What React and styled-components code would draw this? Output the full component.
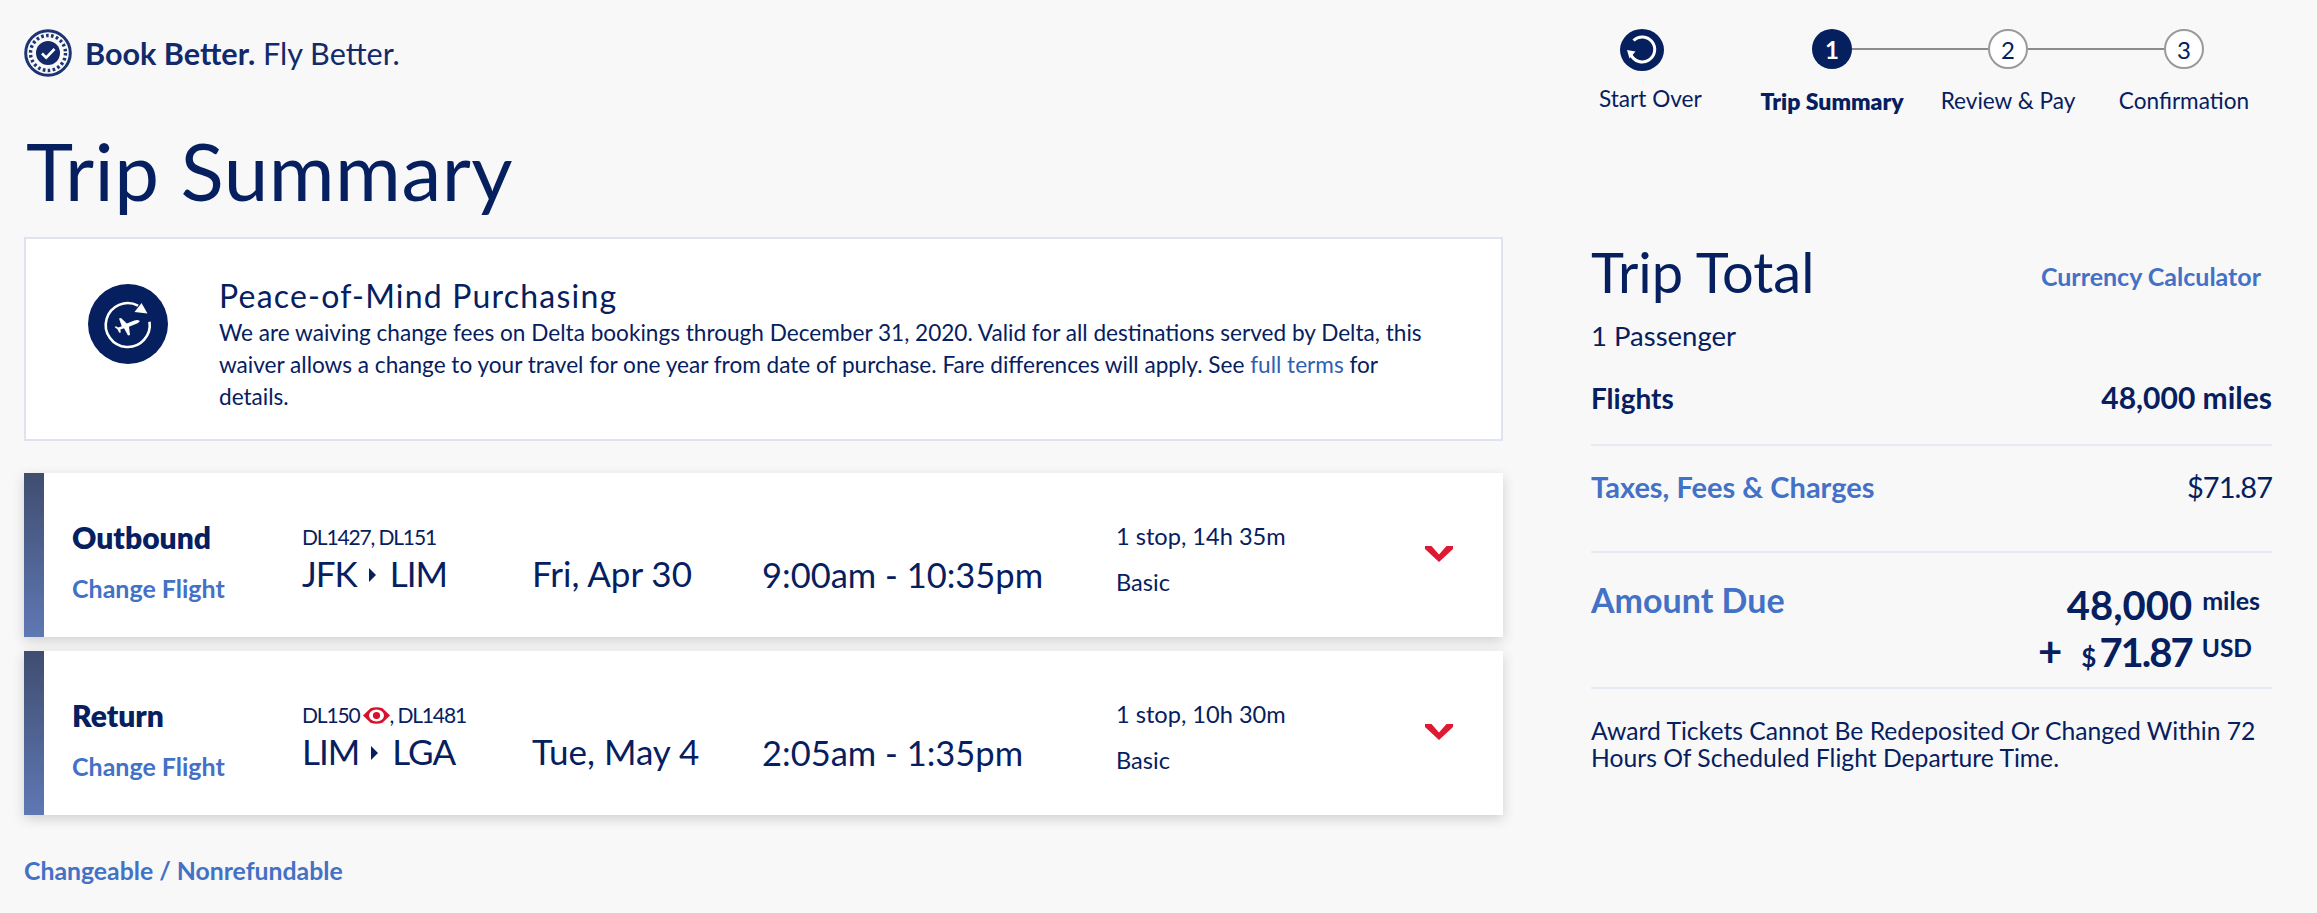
import React from "react";
import styled, { createGlobalStyle } from "styled-components";

const NAVY = "#06205f";
const BLUE = "#4371c6";
const RED = "#e01933";

const Global = createGlobalStyle`
  html, body { margin: 0; padding: 0; background: #f8f8f8; }
  body { font-family: "Lato", "Liberation Sans", sans-serif; color: ${NAVY}; }
  * { box-sizing: border-box; }
`;

const Page = styled.div`
  width: 2317px;
  height: 913px;
  overflow: hidden;
  padding: 29px 45px 0 24px;
  display: grid;
  grid-template-columns: 1479px 681px;
  column-gap: 88px;
  align-items: start;
`;
const LeftColumn = styled.main`display: flex; flex-direction: column;`;
const RightColumn = styled.aside`display: flex; flex-direction: column;`;

const Brand = styled.div`display: flex; align-items: center; height: 48px;`;
const BrandText = styled.div`
  margin-left: 13px;
  font-size: 30.6px;
  white-space: pre;
  color: #122a6b;
  b { font-weight: 700; }
`;
const Title = styled.h1`
  margin: 45px 0 0 2px;
  font-size: 80px;
  line-height: 96px;
  font-weight: 400;
  letter-spacing: 0.5px;
  white-space: nowrap;
`;

const Banner = styled.section`
  margin-top: 19px;
  height: 204px;
  background: #fff;
  border: 2px solid #dee3ef;
  display: flex;
  align-items: flex-start;
  padding: 45px 0 0 62px;
`;
const BannerIcon = styled.svg`width: 80px; height: 80px; flex: none; margin-right: 51px;`;
const BannerBody = styled.div`width: 1230px;`;
const BannerTitle = styled.h2`
  margin: -8px 0 1px;
  font-size: 32px;
  line-height: 40px;
  font-weight: 400;
  letter-spacing: 1.2px;
`;
const BannerText = styled.p`
  margin: 0;
  font-size: 22.6px;
  line-height: 32px;
  a { color: #2f5fb3; text-decoration: none; }
`;

const Card = styled.article`
  margin-top: ${(p) => p.$gap}px;
  height: 164px;
  background: #fff;
  display: grid;
  grid-template-columns: 20px 28px 230px 230px 230px 354px 309px 1fr;
  box-shadow: 0 4px 12px rgba(0, 0, 0, 0.16);
`;
const Bar = styled.div`background: linear-gradient(180deg, #3f4d6f, #5f78b4);`;
const Spacer = styled.div``;
const Cell = styled.div`
  padding-top: ${(p) => p.$top}px;
  display: flex;
  flex-direction: column;
  white-space: nowrap;
`;
const Direction = styled.div`font-size: 30px; line-height: 34px; font-weight: 800;`;
const ChangeLink = styled.a`
  margin-top: 18px;
  font-size: 25px;
  line-height: 32px;
  font-weight: 700;
  color: ${BLUE};
`;
const FlightNums = styled.div`
  display: flex;
  align-items: center;
  font-size: 21px;
  line-height: 26px;
  letter-spacing: -1.15px;
`;
const Route = styled.div`
  margin-top: 1px;
  display: flex;
  align-items: center;
  font-size: 35px;
  line-height: 44px;
  letter-spacing: -1px;
`;
const RouteArrow = styled.svg`width: 7px; height: 14px; margin: 4px 14px 0 12px;`;
const BigText = styled.div`font-size: ${(p) => p.$size}px; line-height: 44px;`;
const SmallText = styled.div`font-size: 23.6px; line-height: 30px; margin-top: ${(p) => p.$gap || 0}px;`;
const Eye = styled.svg`width: 27px; height: 17px; margin: 0 0 0 3px;`;
const Chevron = styled.svg`width: 28px; height: 16px;`;

const Footnote = styled.a`
  margin-top: 40px;
  font-size: 24.8px;
  line-height: 32px;
  font-weight: 700;
  color: ${BLUE};
`;

const Stepper = styled.nav`display: flex; height: 209px;`;
const StartOver = styled.div`width: 153px; padding-left: 8px; display: flex; flex-direction: column;`;
const RoundIcon = styled.svg`width: 44px; height: 42px; margin-left: 21px;`;
const StepLabel = styled.div`
  font-size: ${(p) => (p.$bold ? 23 : 22.6)}px;
  line-height: 28px;
  margin-top: ${(p) => p.$top}px;
  font-weight: ${(p) => (p.$bold ? 800 : 400)};
  white-space: nowrap;
  text-align: ${(p) => p.$align || "center"};
`;
const Steps = styled.ol`
  list-style: none;
  margin: 0;
  padding: 0;
  display: grid;
  grid-template-columns: repeat(3, 176px);
`;
const Step = styled.li`display: flex; flex-direction: column; align-items: stretch;`;
const StepTrack = styled.div`display: flex; align-items: center; height: 40px;`;
const Connector = styled.div`flex: 1; height: 2px; background: ${(p) => (p.$hidden ? "transparent" : "#8c8c8c")};`;
const Bubble = styled.div`
  width: 40px;
  height: 40px;
  border-radius: 50%;
  flex: none;
  display: flex;
  align-items: center;
  justify-content: center;
  font-size: 24px;
  font-weight: ${(p) => (p.$active ? 700 : 400)};
  background: ${(p) => (p.$active ? NAVY : "#fff")};
  color: ${(p) => (p.$active ? "#fff" : NAVY)};
  border: ${(p) => (p.$active ? "none" : "2px solid #9a9a9a")};
`;

const TotalHead = styled.div`display: flex; justify-content: space-between; align-items: flex-start; padding-right: 11px;`;
const TotalTitle = styled.h2`margin: 0; font-size: 56px; line-height: 68px; font-weight: 400;`;
const CurrencyLink = styled.a`margin-top: 23px; font-size: 25px; line-height: 30px; font-weight: 700; color: ${BLUE};`;
const Passengers = styled.div`margin-top: 12px; font-size: 27.5px; line-height: 36px;`;
const Row = styled.div`
  display: flex;
  justify-content: space-between;
  align-items: baseline;
  padding: ${(p) => p.$pad};
  border-bottom: 2px solid #e6ebf5;
`;
const RowLabel = styled.span`
  font-size: ${(p) => p.$size}px;
  line-height: 36px;
  font-weight: ${(p) => p.$weight || 400};
  letter-spacing: ${(p) => p.$track || 0}px;
  color: ${(p) => (p.$link ? BLUE : NAVY)};
`;
const AmountRow = styled.div`
  display: flex;
  justify-content: space-between;
  align-items: flex-start;
  height: 136px;
  padding-top: 29px;
  border-bottom: 2px solid #e6ebf5;
`;
const AmountLines = styled.div`display: flex; flex-direction: column; align-items: flex-end;`;
const AmountLine = styled.div`display: flex; align-items: baseline; padding-right: ${(p) => p.$right}px;`;
const AmountBig = styled.span`font-size: 40px; line-height: 46px; font-weight: 700; letter-spacing: ${(p) => p.$track || 0}px;`;
const AmountPlus = styled.span`font-size: 42px; line-height: 46px; margin-right: 19px; font-weight: 700;`;
const AmountCur = styled.span`font-size: 26px; font-weight: 700; margin-right: 3px;`;
const AmountSup = styled.span`font-size: ${(p) => p.$size}px; font-weight: 700; margin-left: 10px; position: relative; top: -10px;`;
const Notice = styled.p`margin: 28px 0 0; font-size: 24.7px; line-height: 27px;`;

const LogoMark = () => (
  <svg width="48" height="48" viewBox="0 0 48 48" style={{ flex: "none" }}>
    <circle cx="24" cy="24" r="22.3" fill="none" stroke="#1c3474" strokeWidth="3" />
    <circle cx="24" cy="24" r="17.5" fill="none" stroke="#1c3474" strokeWidth="3.4" strokeDasharray="2.6 2.4" />
    <circle cx="24" cy="24" r="12" fill="#14296a" />
    <path d="M18 24.5l4.2 4.2L30.5 20" fill="none" stroke="#fff" strokeWidth="2.6" />
  </svg>
);

const PlaneIcon = () => (
  <BannerIcon viewBox="0 0 80 80">
    <circle cx="40" cy="40" r="40" fill={NAVY} />
    <path d="M61.5 37.8A22 22 0 1 1 50 21.6" fill="none" stroke="#fff" strokeWidth="2.6" />
    <polygon points="59.5,29.5 53.5,19 46.5,28" fill="#fff" />
    <path d="M51.5 36.2c1 1-1 2.6-3.2 3.5L41 42.8l1 8.2-2 .6-4-7.4-3.6 1.4.4 2.8-1.6.4-1.6-3.4-3-2.4 1.4-.8 2.2 1.4 3.6-1.4-2.8-7.6 2-.6 5.8 5.6 7.6-3c2.2-.9 4.1-.9 5 .4z" fill="#fff" />
  </BannerIcon>
);

const RestartIcon = () => (
  <RoundIcon viewBox="0 0 44 42">
    <ellipse cx="22" cy="21" rx="22" ry="21" fill={NAVY} />
    <path d="M11 26A12.5 12.5 0 1 0 13.5 11.5" fill="none" stroke="#fff" strokeWidth="3" />
    <polygon points="7,21 15.5,22.5 9.5,29.5" fill="#fff" />
  </RoundIcon>
);

const EyeIcon = () => (
  <Eye viewBox="0 0 27 17">
    <path d="M0 8.5L7.5 1.2Q13.5-.8 19.5 1.2L27 8.5 19.5 15.8Q13.5 17.8 7.5 15.8Z" fill="#d8112b" />
    <ellipse cx="13.5" cy="8.5" rx="7.5" ry="6" fill="#fff" />
    <circle cx="13.5" cy="8.5" r="3.6" fill="#d8112b" />
  </Eye>
);

const Arrow = () => (
  <RouteArrow viewBox="0 0 7 14">
    <polygon points="0,0 7,7 0,14" fill={NAVY} />
  </RouteArrow>
);

const Down = () => (
  <Chevron viewBox="0 0 28 16">
    <polygon points="0,0 6.5,0 14,8.5 21.5,0 28,0 28,3 14,16 0,3" fill={RED} />
  </Chevron>
);

const FlightCard = ({ gap, label, nums, from, to, date, time, stops }) => (
  <Card $gap={gap}>
    <Bar />
    <Spacer />
    <Cell $top={47}>
      <Direction>{label}</Direction>
      <ChangeLink>Change Flight</ChangeLink>
    </Cell>
    <Cell $top={51}>
      <FlightNums>{nums}</FlightNums>
      <Route>{from}<Arrow />{to}</Route>
    </Cell>
    <Cell $top={78}><BigText $size={35}>{date}</BigText></Cell>
    <Cell $top={80}><BigText $size={34.5}>{time}</BigText></Cell>
    <Cell $top={48}>
      <SmallText>{stops}</SmallText>
      <SmallText $gap={16}>Basic</SmallText>
    </Cell>
    <Cell $top={73}><Down /></Cell>
  </Card>
);

export default function App() {
  return (
    <Page>
      <Global />
      <LeftColumn>
        <Brand>
          <LogoMark />
          <BrandText><b>Book Better.</b> Fly Better.</BrandText>
        </Brand>
        <Title>Trip Summary</Title>
        <Banner>
          <PlaneIcon />
          <BannerBody>
            <BannerTitle>Peace-of-Mind Purchasing</BannerTitle>
            <BannerText>
              We are waiving change fees on Delta bookings through December 31, 2020. Valid for all destinations served by Delta, this waiver allows a change to your travel for one year from date of purchase. Fare differences will apply. See <a>full terms</a> for details.
            </BannerText>
          </BannerBody>
        </Banner>
        <FlightCard gap={32} label="Outbound" nums="DL1427, DL151" from="JFK" to="LIM" date="Fri, Apr 30" time="9:00am - 10:35pm" stops="1 stop, 14h 35m" />
        <FlightCard gap={14} label="Return" nums={<>DL150<EyeIcon />, DL1481</>} from="LIM" to="LGA" date="Tue, May 4" time="2:05am - 1:35pm" stops="1 stop, 10h 30m" />
        <Footnote>Changeable / Nonrefundable</Footnote>
      </LeftColumn>
      <RightColumn>
        <Stepper>
          <StartOver>
            <RestartIcon />
            <StepLabel $top={14} $align="left">Start Over</StepLabel>
          </StartOver>
          <Steps>
            <Step>
              <StepTrack><Connector $hidden /><Bubble $active>1</Bubble><Connector /></StepTrack>
              <StepLabel $top={18} $bold>Trip Summary</StepLabel>
            </Step>
            <Step>
              <StepTrack><Connector /><Bubble>2</Bubble><Connector /></StepTrack>
              <StepLabel $top={18}>Review &amp; Pay</StepLabel>
            </Step>
            <Step>
              <StepTrack><Connector /><Bubble>3</Bubble><Connector $hidden /></StepTrack>
              <StepLabel $top={18}>Confirmation</StepLabel>
            </Step>
          </Steps>
        </Stepper>
        <TotalHead>
          <TotalTitle>Trip Total</TotalTitle>
          <CurrencyLink>Currency Calculator</CurrencyLink>
        </TotalHead>
        <Passengers>1 Passenger</Passengers>
        <Row $pad="25px 0 28px">
          <RowLabel $size={28} $weight={700}>Flights</RowLabel>
          <RowLabel $size={30} $weight={700}>48,000 miles</RowLabel>
        </Row>
        <Row $pad="23px 0 46px">
          <RowLabel $size={29} $weight={700} $link>Taxes, Fees &amp; Charges</RowLabel>
          <RowLabel $size={29} $track={-1}>$71.87</RowLabel>
        </Row>
        <AmountRow>
          <RowLabel $size={34} $weight={700} $link>Amount Due</RowLabel>
          <AmountLines>
            <AmountLine $right={12}>
              <AmountBig>48,000</AmountBig>
              <AmountSup $size={25}>miles</AmountSup>
            </AmountLine>
            <AmountLine $right={20}>
              <AmountPlus>+</AmountPlus>
              <AmountCur>$</AmountCur>
              <AmountBig $track={-2}>71.87</AmountBig>
              <AmountSup $size={24.5}>USD</AmountSup>
            </AmountLine>
          </AmountLines>
        </AmountRow>
        <Notice>Award Tickets Cannot Be Redeposited Or Changed Within 72 Hours Of Scheduled Flight Departure Time.</Notice>
      </RightColumn>
    </Page>
  );
}
